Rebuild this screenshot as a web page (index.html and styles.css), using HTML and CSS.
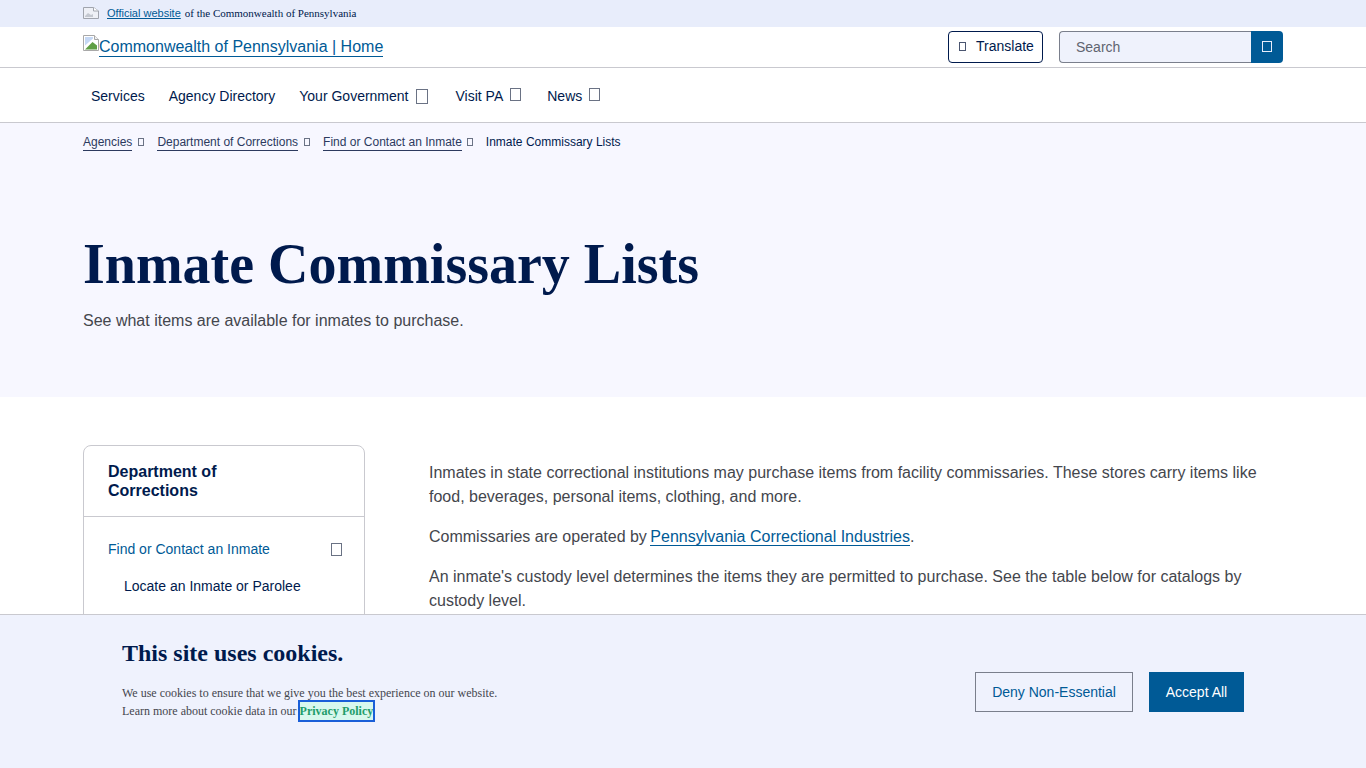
FILE: index.html
```html
<!DOCTYPE html>
<html lang="en">
<head>
<meta charset="utf-8">
<title>Inmate Commissary Lists</title>
<link rel="stylesheet" href="styles.css">
</head>
<body>
<div class="official">
  <div class="wrap official-in">
    <svg class="flag" width="16" height="12" viewBox="0 0 16 12"><path d="M.5.5h10l5 3.5v7.500H.5z" fill="#eef0f6" stroke="#a0a4ad"/><path d="M10.500.5v3.500h5" fill="#fff" stroke="#a0a4ad"/><path d="M2 9l3-3 3 2 2-1v3H2z" fill="#c4c8d0"/></svg>
    <a class="official-link" href="#">Official website</a>
    <span class="official-text">of the Commonwealth of Pennsylvania</span>
  </div>
</div>
<header class="masthead">
  <div class="wrap masthead-in">
    <a class="logo" href="#"><svg class="broken" width="16" height="16" viewBox="0 0 16 16"><path d="M.5.500h11l4 4v11H.5z" fill="#fff" stroke="#a8a8a8"/><path d="M11.500.500v4h4" fill="#f2f2f2" stroke="#a8a8a8"/><path d="M2 2h8v1.500L2 10.500z" fill="#c5d8f5"/><path d="M2 14.500L9.500 7l4.500 3.500v4z" fill="#5f9f45"/></svg><span class="logo-text">Commonwealth of Pennsylvania | Home</span></a>
    <div class="tools">
      <button class="translate"><span class="tofu tofu-t"></span>Translate</button>
      <div class="search"><span class="search-field">Search</span><span class="search-btn"><span class="tofu tofu-s"></span></span></div>
    </div>
  </div>
</header>
<nav class="mainnav">
  <div class="wrap nav-in">
    <a class="nav-item" href="#">Services</a>
    <a class="nav-item" href="#">Agency Directory</a>
    <a class="nav-item nav-gov" href="#">Your Government<span class="tofu tofu-n tofu-low"></span></a>
    <a class="nav-item nav-visit" href="#">Visit PA<span class="tofu tofu-n"></span></a>
    <a class="nav-item" href="#">News<span class="tofu tofu-n"></span></a>
  </div>
</nav>
<section class="hero">
  <div class="wrap">
    <div class="crumbs">
      <a href="#">Agencies</a><span class="tofu tofu-c"></span>
      <a href="#">Department of Corrections</a><span class="tofu tofu-c"></span>
      <a href="#">Find or Contact an Inmate</a><span class="tofu tofu-c tofu-c-last"></span>
      <span class="crumb-now">Inmate Commissary Lists</span>
    </div>
    <h1>Inmate Commissary Lists</h1>
    <p class="lede">See what items are available for inmates to purchase.</p>
  </div>
</section>
<main class="wrap content">
  <aside class="side">
    <h2>Department of Corrections</h2>
    <div class="side-list">
      <div class="side-row"><a href="#">Find or Contact an Inmate</a><span class="tofu tofu-side"></span></div>
      <div class="side-sub">Locate an Inmate or Parolee</div>
    </div>
  </aside>
  <article class="body">
    <p>Inmates in state correctional institutions may purchase items from facility commissaries. These stores carry items like food, beverages, personal items, clothing, and more.</p>
    <p>Commissaries are operated by <a href="#">Pennsylvania Correctional Industries</a>.</p>
    <p>An inmate's custody level determines the items they are permitted to purchase. See the table below for catalogs by custody level.</p>
  </article>
</main>
<div class="cookie">
  <div class="cookie-copy">
    <h2>This site uses cookies.</h2>
    <p>We use cookies to ensure that we give you the best experience on our website.<br>Learn more about cookie data in our <a href="#">Privacy Policy</a></p>
  </div>
  <div class="cookie-actions">
    <button class="deny">Deny Non-Essential</button>
    <button class="accept">Accept All</button>
  </div>
</div>
</body>
</html>
```
FILE: styles.css
```css
* { box-sizing: border-box; }
html, body { margin: 0; height: 768px; overflow: hidden; }
body { font-family: "Liberation Sans", Arial, sans-serif; color: #001a4d; background: #fff; position: relative; }
a { color: inherit; }
.wrap { width: 1200px; margin: 0 auto; }
.tofu { display: inline-block; border: 1px solid currentColor; flex: none; }

.official { height: 27px; background: #e8edfb; }
.official-in { display: flex; align-items: center; height: 26px; }
.flag { margin-right: 8px; }
.official-link { font-size: 11px; color: #005a96; text-decoration: underline; margin-right: 4px; }
.official-text { font-family: "Liberation Serif", serif; font-size: 11px; color: #001a4d; }

.masthead { height: 41px; border-bottom: 1px solid #c9c9cf; }
.masthead-in { display: flex; justify-content: space-between; align-items: flex-start; }
.logo { display: flex; align-items: flex-start; margin-top: 8px; font-size: 16px; line-height: 22px; color: #005a96; text-decoration: none; }
.logo-text { border-bottom: 1px solid #005a96; height: 22px; line-height: 23px; }
.tools { display: flex; gap: 16px; margin-top: 4px; }
.translate { display: flex; align-items: center; width: 95px; height: 32px; padding: 0 0 2px 10px; background: #fff; border: 1px solid #001a4d; border-radius: 4px; font: 14px "Liberation Sans", Arial, sans-serif; color: #001a4d; }
.tofu-t { width: 7px; height: 9px; margin-right: 10px; border-color: #4a5570; }
.search { display: flex; width: 224px; height: 32px; }
.search-field { flex: 1; background: #eff2fc; border: 1px solid #7a7f8c; border-right: 0; border-radius: 4px 0 0 4px; padding-left: 16px; font-size: 14px; line-height: 31px; color: #5f6470; }
.search-btn { width: 32px; background: #005a96; border-radius: 0 4px 4px 0; display: flex; align-items: center; justify-content: center; color: #e8edfb; }
.tofu-s { width: 10px; height: 11px; margin-bottom: 2px; }

.mainnav { height: 55px; border-bottom: 1px solid #c9c9cf; }
.nav-in { display: flex; gap: 24px; padding: 19px 8px 0; }
.nav-item { font-size: 14px; line-height: 19px; color: #001a4d; text-decoration: none; display: flex; align-items: flex-start; }
.nav-gov { margin-right: 4px; }
.nav-visit { margin-right: 2px; }
.tofu-n { width: 11px; height: 13px; margin-left: 7px; margin-top: 1px; border-color: #6a7284; }
.tofu-low { width: 12px; height: 15px; margin-top: 2px; }

.hero { height: 274px; background: #f7f7ff; }
.crumbs { display: flex; align-items: flex-start; padding-top: 11px; font-size: 12px; line-height: 16px; color: #2c3a5e; }
.crumbs a { text-decoration: none; border-bottom: 1px solid #2c3a5e; }
.tofu-c { width: 6px; height: 8px; margin: 4px 13px 0 6px; border-color: #6a7284; }
.tofu-c-last { margin-left: 5px; }
.crumb-now { color: #001a4d; }
h1 { margin: 81px 0 0; font-family: "Liberation Serif", serif; font-weight: 700; font-size: 56px; line-height: 64px; color: #001a4d; }
.lede { margin: 13px 0 0; font-size: 16px; line-height: 24px; color: #44464d; }

.content { display: flex; gap: 64px; padding-top: 48px; }
.side { width: 282px; flex: none; height: 300px; border: 1px solid #c9c9cf; border-radius: 8px; }
.side h2 { margin: 0; padding: 16px 120px 16px 24px; height: 71px; border-bottom: 1px solid #c9c9cf; font-size: 16px; line-height: 19px; color: #001a4d; }
.side-list { padding: 23px 22px 0 24px; font-size: 14px; line-height: 18px; }
.side-row { display: flex; justify-content: space-between; align-items: center; color: #005a96; }
.side-row a { text-decoration: none; }
.tofu-side { width: 11px; height: 13px; border-color: #6a7284; }
.side-sub { margin: 19px 0 0 16px; color: #001a4d; }
.body { flex: 1; padding-top: 16px; font-size: 16px; line-height: 24px; color: #44464d; }
.body p { margin: 0 0 16px; }
.body a { color: #005a96; text-decoration: none; border-bottom: 1px solid #005a96; margin-left: -1px; }

.cookie { position: absolute; left: 0; right: 0; top: 614px; height: 154px; background: #eff2fd; border-top: 1px solid #c9c9cf; display: flex; justify-content: space-between; padding: 0 122px; }
.cookie h2 { margin: 24px 0 0; font-family: "Liberation Serif", serif; font-size: 24px; line-height: 28px; color: #001a4d; }
.cookie p { margin: 17px 0 0; font-family: "Liberation Serif", serif; font-size: 12px; line-height: 18px; color: #44464d; }
.cookie p a { font-weight: 700; color: #1f9d6b; background: #d8f8ee; outline: 2px solid #1a5fd8; text-decoration: none; padding: 2px 0; }
.cookie-actions { display: flex; gap: 16px; margin-top: 57px; height: 40px; }
.cookie-actions button { height: 40px; font: 14px "Liberation Sans", Arial, sans-serif; }
.deny { width: 158px; background: #eff2fd; border: 1px solid #7a7f8c; color: #005a96; }
.accept { width: 95px; background: #005a96; border: 1px solid #005a96; color: #fff; }
```
